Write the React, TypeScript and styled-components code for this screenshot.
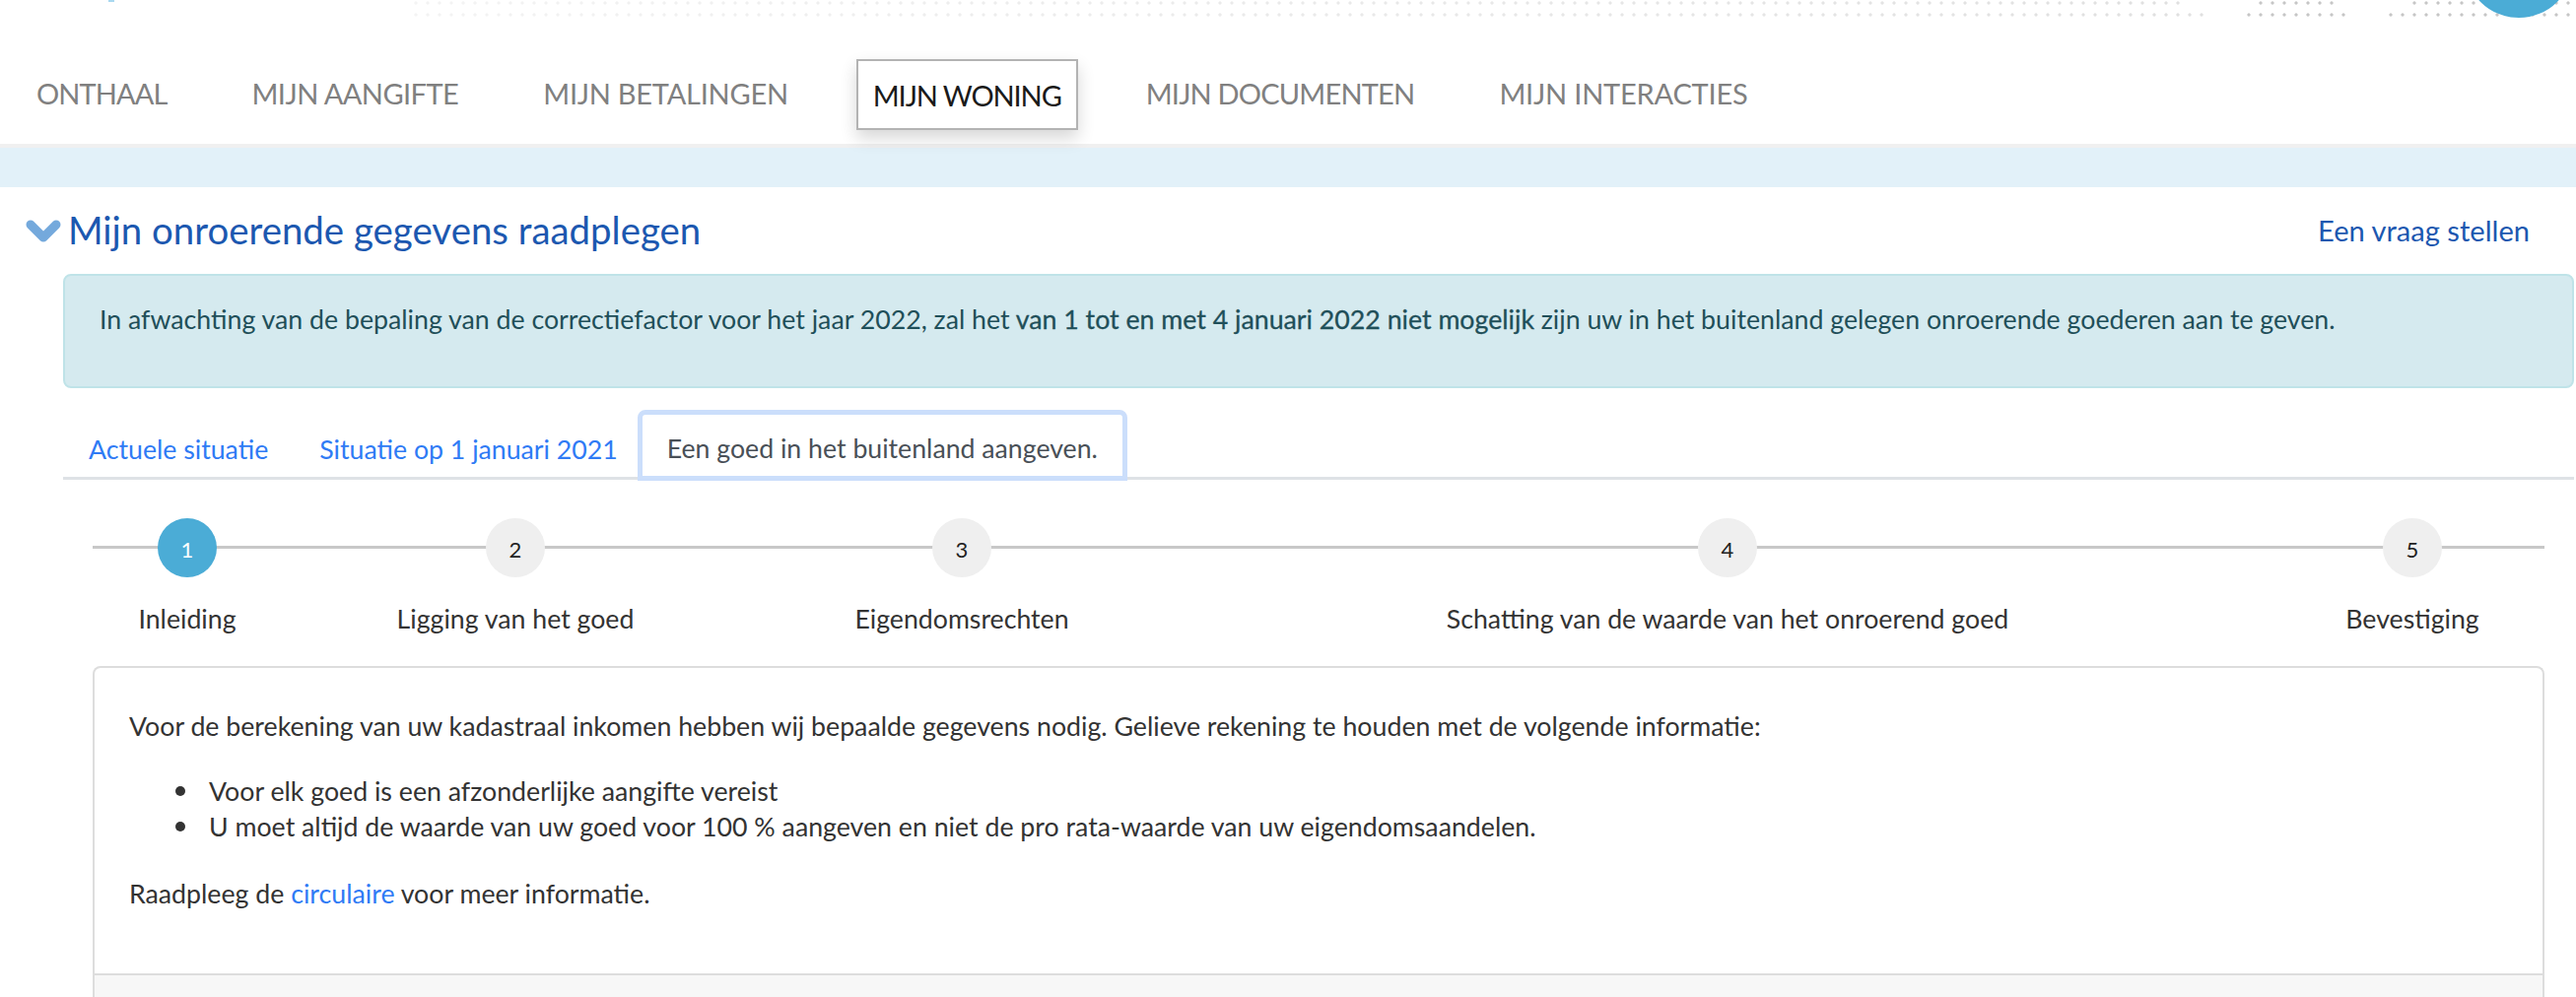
import React from 'react';
import styled, {createGlobalStyle} from 'styled-components';

const FONT = '"Lato", "Noto Sans", sans-serif';

const GlobalStyle = createGlobalStyle`
  html, body { margin: 0; padding: 0; background: #fff; }
  body { font-family: ${FONT}; color: #333; height: 1012px; overflow: hidden; }
  * { box-sizing: border-box; }
`;

const Page = styled.div`
  position: relative;
  width: 2614px;
  height: 1012px;
  overflow: hidden;
`;

const TopBar = styled.div`
  height: 20px;
  display: flex;
  flex-direction: column;
  gap: 6px;
`;

const DotRow = styled.div`
  display: flex;
  height: 6px;
`;

const DotStrip = styled.div<{$left: number, $width: number, $faded?: boolean}>`
  margin-left: ${p => p.$left}px;
  width: ${p => p.$width}px;
  height: 6px;
  background-image: radial-gradient(circle at center, #c6c6c6 1.3px, transparent 1.9px);
  background-size: 12px 6px;
  ${p => p.$faded && `
    mask-image: linear-gradient(to right, rgba(0, 0, 0, 0.2), rgba(0, 0, 0, 0.55));
  `}
`;

const Avatar = styled.div`
  position: absolute;
  top: -92px;
  left: 2501px;
  width: 110px;
  height: 110px;
  border-radius: 50%;
  background: #4bacd6;
`;

const LogoTip = styled.div`
  position: absolute;
  top: 0;
  left: 110px;
  width: 6px;
  height: 2px;
  background: #a9d8f0;
`;

const Nav = styled.nav`
  display: flex;
  gap: 52px;
  align-items: center;
  margin-top: 40px;
  padding: 0 0 14px 20px;
  border-bottom: 4px solid #f0f0f0;
  height: 90px;
`;

const NavItem = styled.a<{$active?: boolean, $tracking: number}>`
  display: flex;
  align-items: center;
  height: 72px;
  padding: ${p => (p.$active ? '1px 15px 0' : '0 17px 3px')};
  font-size: 29px;
  letter-spacing: ${p => p.$tracking}px;
  color: ${p => (p.$active ? '#1a1a1a' : '#808080')};
  white-space: nowrap;
  ${p => p.$active && `
    border: 2px solid #b3b3b3;
    background: #fff;
    box-shadow: 0 8px 16px rgba(0, 0, 0, 0.16);
  `}
`;

const BlueBar = styled.div`
  height: 40px;
  background: #e2f1f9;
`;

const TitleRow = styled.div`
  display: flex;
  align-items: center;
  height: 48px;
  margin: 19px 0 21px;
  padding: 0 47px 0 26px;
`;

const Chevron = styled.svg`
  width: 36px;
  height: 24px;
  margin: 4px 7px 0 0;
  flex: none;
`;

const Title = styled.h1`
  flex: 1;
  margin: 0;
  font-size: 38.4px;
  font-weight: 400;
  line-height: 48px;
  color: #1c58b0;
`;

const AskLink = styled.a`
  font-size: 29.1px;
  margin-top: 1px;
  color: #1c58b0;
`;

const Main = styled.main`
  padding: 0 2px 0 64px;
`;

const Alert = styled.div`
  height: 116px;
  padding: 26px 0 0 35px;
  border: 2px solid #bfe3e8;
  border-radius: 8px;
  background: #d5eaef;
  font-size: 26.73px;
  line-height: 36px;
  color: #1f4f59;
  white-space: nowrap;
`;

const AlertStrong = styled.strong`
  font-weight: 400;
  -webkit-text-stroke: 0.3px #1f4f59;
`;

const Tabs = styled.div`
  display: flex;
  align-items: flex-end;
  height: 71px;
  margin-top: 22px;
  border-bottom: 3px solid #dee2e6;
`;

const Tab = styled.a<{$active?: boolean}>`
  font-size: 26.7px;
  line-height: 36px;
  white-space: nowrap;
  color: ${p => (p.$active ? '#495057' : '#2f7bf5')};
  padding: ${p => (p.$active ? '16px 25px 10px' : '0 26px 10px')};
  ${p => p.$active && `
    margin: 0 0 -4px -6px;
    border: 5px solid #cbdefb;
    border-radius: 8px 8px 0 0;
    background: #fff;
  `}
`;

const Inner = styled.div`
  margin: 0 30px;
`;

const Stepper = styled.div`
  position: relative;
  display: flex;
  margin-top: 39px;
  &::before {
    content: '';
    position: absolute;
    top: 28px;
    left: 0;
    right: 0;
    height: 3px;
    background: #c8c8c8;
  }
`;

const Step = styled.div<{$width: number}>`
  position: relative;
  flex: none;
  width: ${p => p.$width}px;
  display: flex;
  flex-direction: column;
  align-items: center;
`;

const StepCircle = styled.div<{$active?: boolean}>`
  display: flex;
  align-items: center;
  justify-content: center;
  width: 60px;
  height: 60px;
  padding-top: 3px;
  border-radius: 50%;
  font-size: 22px;
  background: ${p => (p.$active ? '#4bacd6' : '#efefef')};
  color: ${p => (p.$active ? '#fff' : '#222')};
`;

const StepLabel = styled.div`
  margin-top: 24px;
  font-size: 26.7px;
  line-height: 36px;
  color: #333;
  white-space: nowrap;
`;

const Card = styled.section`
  height: 336px;
  margin-top: 30px;
  display: flex;
  flex-direction: column;
  border: 2px solid #ddd;
  border-bottom: none;
  border-radius: 8px 8px 0 0;
`;

const CardBody = styled.div`
  flex: 1;
  padding: 41px 35px 0;
  font-size: 26.72px;
  line-height: 36px;
  color: #333;
`;

const Para = styled.p`
  margin: 0;
  white-space: nowrap;
`;

const BulletList = styled.ul`
  margin: 30px 0 32px;
  padding: 0 0 0 47px;
  list-style: none;
  white-space: nowrap;
`;

const BulletItem = styled.li`
  display: flex;
  align-items: center;
  &::before {
    content: '';
    flex: none;
    width: 10px;
    height: 10px;
    margin-right: 24px;
    border-radius: 50%;
    background: #333;
  }
`;

const InlineLink = styled.a`
  color: #2f7bf5;
`;

const CardFooter = styled.div`
  height: 24px;
  border-top: 2px solid #ddd;
  background: #f7f7f7;
`;

const NAV_ITEMS = [
  {label: 'ONTHAAL', tracking: -0.9},
  {label: 'MIJN AANGIFTE', tracking: -0.55},
  {label: 'MIJN BETALINGEN', tracking: -0.25},
  {label: 'MIJN WONING', tracking: -1.1},
  {label: 'MIJN DOCUMENTEN', tracking: -0.8},
  {label: 'MIJN INTERACTIES', tracking: -0.2},
];

const STEPS = [
  {label: 'Inleiding', width: 192},
  {label: 'Ligging van het goed', width: 474},
  {label: 'Eigendomsrechten', width: 432},
  {label: 'Schatting van de waarde van het onroerend goed', width: 1122},
  {label: 'Bevestiging', width: 268},
];

const App = () => (
  <Page>
    <GlobalStyle/>
    <TopBar>
      <DotRow>
        <DotStrip $left={416} $width={1800} $faded/>
        <DotStrip $left={72} $width={84}/>
        <DotStrip $left={72} $width={170}/>
      </DotRow>
      <DotRow>
        <DotStrip $left={416} $width={1824} $faded/>
        <DotStrip $left={36} $width={108}/>
        <DotStrip $left={36} $width={194}/>
      </DotRow>
    </TopBar>
    <LogoTip/>
    <Avatar/>

    <Nav>
      {NAV_ITEMS.map(item => (
        <NavItem key={item.label} $tracking={item.tracking} $active={item.label === 'MIJN WONING'}>{item.label}</NavItem>
      ))}
    </Nav>
    <BlueBar/>

    <TitleRow>
      <Chevron viewBox="0 0 36 24">
        <path d="M5 5 L18 18 L31 5" fill="none" stroke="#74a9dc" strokeWidth="9" strokeLinecap="round" strokeLinejoin="round"/>
      </Chevron>
      <Title>Mijn onroerende gegevens raadplegen</Title>
      <AskLink>Een vraag stellen</AskLink>
    </TitleRow>

    <Main>
      <Alert>
        In afwachting van de bepaling van de correctiefactor voor het jaar 2022, zal het <AlertStrong>van 1 tot en met 4 januari 2022 niet mogelijk</AlertStrong> zijn uw in het buitenland gelegen onroerende goederen aan te geven.
      </Alert>

      <Tabs>
        <Tab>Actuele situatie</Tab>
        <Tab>Situatie op 1 januari 2021</Tab>
        <Tab $active>Een goed in het buitenland aangeven.</Tab>
      </Tabs>

      <Inner>
        <Stepper>
          {STEPS.map((step, index) => (
            <Step key={step.label} $width={step.width}>
              <StepCircle $active={index === 0}>{index + 1}</StepCircle>
              <StepLabel>{step.label}</StepLabel>
            </Step>
          ))}
        </Stepper>

        <Card>
          <CardBody>
            <Para>Voor de berekening van uw kadastraal inkomen hebben wij bepaalde gegevens nodig. Gelieve rekening te houden met de volgende informatie:</Para>
            <BulletList>
              <BulletItem>Voor elk goed is een afzonderlijke aangifte vereist</BulletItem>
              <BulletItem>U moet altijd de waarde van uw goed voor 100 % aangeven en niet de pro rata-waarde van uw eigendomsaandelen.</BulletItem>
            </BulletList>
            <Para>Raadpleeg de <InlineLink>circulaire</InlineLink> voor meer informatie.</Para>
          </CardBody>
          <CardFooter/>
        </Card>
      </Inner>
    </Main>
  </Page>
);

export default App;
